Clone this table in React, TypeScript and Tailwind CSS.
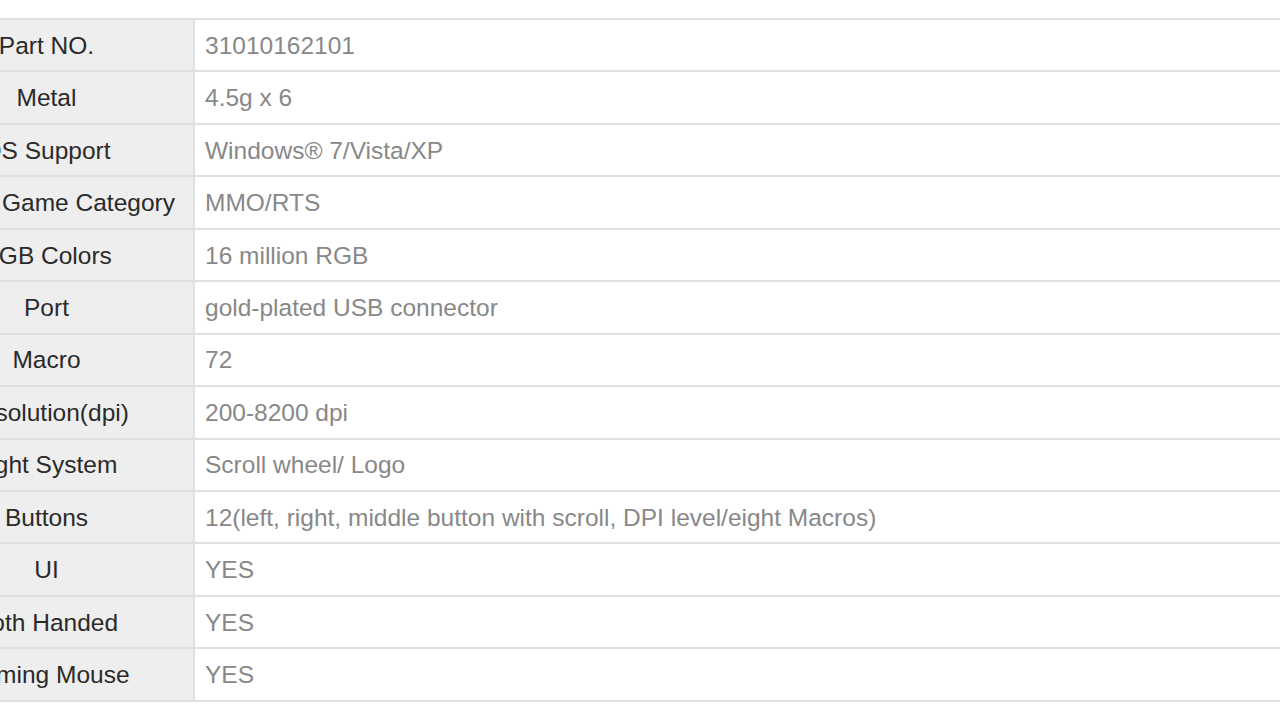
const specs: { label: string; value: string; left?: boolean }[] = [
  { label: 'Part NO.', value: '31010162101' },
  { label: 'Metal', value: '4.5g x 6' },
  { label: 'OS Support', value: 'Windows® 7/Vista/XP' },
  { label: 'Game Category', value: 'MMO/RTS', left: true },
  { label: 'RGB Colors', value: '16 million RGB' },
  { label: 'Port', value: 'gold-plated USB connector' },
  { label: 'Macro', value: '72' },
  { label: 'Resolution(dpi)', value: '200-8200 dpi' },
  { label: 'Light System', value: 'Scroll wheel/ Logo' },
  { label: 'Buttons', value: '12(left, right, middle button with scroll, DPI level/eight Macros)' },
  { label: 'UI', value: 'YES' },
  { label: 'Both Handed', value: 'YES' },
  { label: 'Gaming Mouse', value: 'YES' },
];

export default function App() {
  return (
    <div className="w-[1280px] h-[722px] overflow-hidden bg-white font-['Liberation_Sans',Arial,sans-serif] text-[24.5px]">
      {/* spec table, clipped on the left like the product page */}
      <div className="-ml-[100px] mt-[18px] w-[1480px] border-b-2 border-[#e0e0e0]">
        {specs.map((s) => (
          <div key={s.label} className="flex h-[52.45px] border-t-2 border-[#e0e0e0]">
            <div
              className={
                s.left
                  ? 'w-[295px] shrink-0 bg-[#eeeeee] border-r-2 border-[#e0e0e0] flex items-center pt-[2px] pl-[102px] text-[#2a2a2a] whitespace-nowrap'
                  : 'w-[295px] shrink-0 bg-[#eeeeee] border-r-2 border-[#e0e0e0] flex items-center justify-center pt-[2px] text-[#2a2a2a] whitespace-nowrap'
              }
            >
              {s.label}
            </div>
            <div className="flex-1 flex items-center pt-[2px] pl-[10px] text-[#888] whitespace-nowrap">{s.value}</div>
          </div>
        ))}
      </div>
    </div>
  );
}
